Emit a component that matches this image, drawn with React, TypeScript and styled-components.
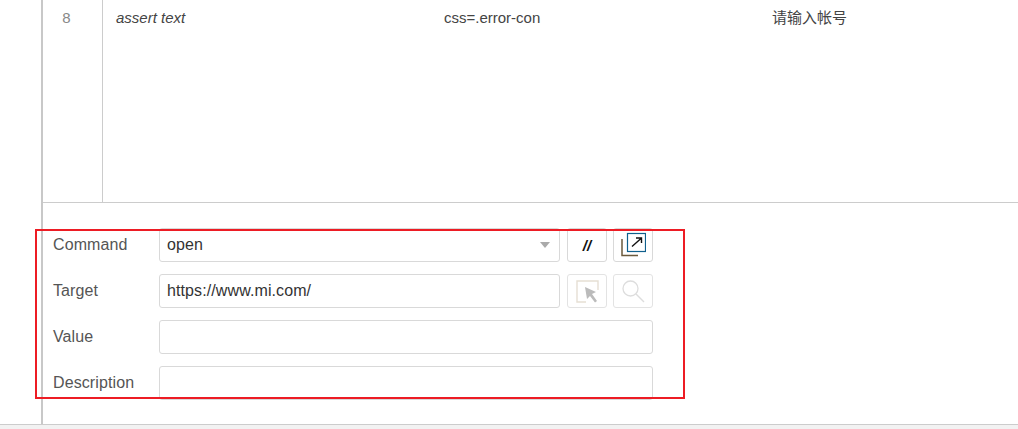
import styled, { createGlobalStyle } from 'styled-components'

const GlobalStyle = createGlobalStyle`
  html, body {
    margin: 0;
    padding: 0;
    background: #fff;
    overflow: hidden;
  }
  body {
    font-family: "Liberation Sans", Arial, "Noto Sans CJK SC", sans-serif;
    font-size: 15px;
    color: #333;
  }
`

const Page = styled.div`
  position: relative;
  width: 1018px;
  height: 429px;
  overflow: hidden;
  display: flex;
  flex-direction: column;
`

const Workspace = styled.div`
  height: 424px;
  margin-left: 41px;
  border-left: 2px solid #c8c8c8;
  display: flex;
  flex-direction: column;
`

const StatusBar = styled.div`
  height: 4px;
  border-top: 1px solid #ccc;
  background: #f2f2f2;
`

const Table = styled.div`
  height: 202px;
  border-bottom: 1px solid #ccc;
  flex: none;
`

const Row = styled.div`
  height: 202px;
  display: flex;
`

const IndexCell = styled.div`
  width: 47px;
  flex: none;
  border-right: 1px solid #ccc;
  padding: 10px 12px 0 0;
  line-height: 16px;
  text-align: center;
  color: #888;
`

const Cell = styled.div<{ $italic?: boolean }>`
  width: 328px;
  flex: none;
  box-sizing: border-box;
  padding: 10px 13px 0;
  line-height: 16px;
  color: #444;
  font-style: ${(p) => (p.$italic ? 'italic' : 'normal')};
`

const Editor = styled.div`
  width: 600px;
  padding: 25px 0 0 10px;
  display: flex;
  flex-direction: column;
  gap: 12px;
`

const Field = styled.div`
  display: flex;
  align-items: flex-start;
  height: 34px;
`

const Label = styled.div`
  width: 106px;
  flex: none;
  line-height: 34px;
  font-size: 16px;
  letter-spacing: 0.1px;
  color: #555;
`

const Controls = styled.div`
  flex: 1;
  display: flex;
  gap: 6px;
`

const InputBox = styled.div<{ $withButtons?: boolean }>`
  flex: 1;
  height: 34px;
  box-sizing: border-box;
  border: 1px solid #d9d9d9;
  border-radius: 3px;
  padding: 0 7px;
  line-height: 32px;
  font-size: 16px;
  letter-spacing: 0.1px;
  color: #333;
  display: flex;
  align-items: center;
  justify-content: space-between;
  margin-right: ${(p) => (p.$withButtons ? '1px' : '0')};
`

const Caret = styled.span`
  width: 0;
  height: 0;
  border-left: 5.5px solid transparent;
  border-right: 5.5px solid transparent;
  border-top: 6px solid #aaa;
  margin-right: 2px;
`

const IconButton = styled.div<{ $disabled?: boolean }>`
  width: 40px;
  height: 34px;
  flex: none;
  box-sizing: border-box;
  border: 1px solid ${(p) => (p.$disabled ? '#e3e3e3' : '#d9d9d9')};
  border-radius: 3px;
  display: flex;
  align-items: center;
  justify-content: center;
  font-weight: bold;
  font-style: italic;
  font-size: 15px;
  color: #111;
`

const Highlight = styled.div`
  position: absolute;
  left: 35px;
  top: 229px;
  width: 646px;
  height: 166px;
  border: 2px solid #ed1c24;
  pointer-events: none;
`

const OpenIcon = () => (
  <svg width="26" height="26" viewBox="0 0 26 26" fill="none">
    <rect x="7.5" y="1.5" width="18" height="18" stroke="#0f5f8c" strokeWidth="1.2" />
    <path d="M2 7V23.5H18" stroke="#6b5a3c" strokeWidth="1.5" />
    <path d="M12 14.5L21 6.5M16 6H21.5V11" stroke="#111" strokeWidth="1.4" />
  </svg>
)

const SelectIcon = () => (
  <svg width="26" height="26" viewBox="0 0 26 26" fill="none">
    <path d="M12 24H3V3H24V12" stroke="#e6dfd4" strokeWidth="1.4" />
    <path d="M11 9L22 14L18 16L23 23L21 24.5L16 18L13 21Z" fill="#bbb" />
  </svg>
)

const SearchIcon = () => (
  <svg width="26" height="26" viewBox="0 0 26 26" fill="none">
    <circle cx="10.5" cy="10.5" r="7.5" stroke="#ddd" strokeWidth="1.3" />
    <path d="M16 16L24 24" stroke="#ddd" strokeWidth="1.5" />
  </svg>
)

export default function App() {
  return (
    <Page>
      <GlobalStyle />
      <Workspace>
        <Table>
          <Row>
            <IndexCell>8</IndexCell>
            <Cell $italic>assert text</Cell>
            <Cell>css=.error-con</Cell>
            <Cell>请输入帐号</Cell>
          </Row>
        </Table>
        <Editor>
          <Field>
            <Label>Command</Label>
            <Controls>
              <InputBox $withButtons>
                open
                <Caret />
              </InputBox>
              <IconButton>//</IconButton>
              <IconButton>
                <OpenIcon />
              </IconButton>
            </Controls>
          </Field>
          <Field>
            <Label>Target</Label>
            <Controls>
              <InputBox $withButtons>https://www.mi.com/</InputBox>
              <IconButton $disabled>
                <SelectIcon />
              </IconButton>
              <IconButton $disabled>
                <SearchIcon />
              </IconButton>
            </Controls>
          </Field>
          <Field>
            <Label>Value</Label>
            <Controls>
              <InputBox />
            </Controls>
          </Field>
          <Field>
            <Label>Description</Label>
            <Controls>
              <InputBox />
            </Controls>
          </Field>
        </Editor>
      </Workspace>
      <StatusBar />
      <Highlight />
    </Page>
  )
}
